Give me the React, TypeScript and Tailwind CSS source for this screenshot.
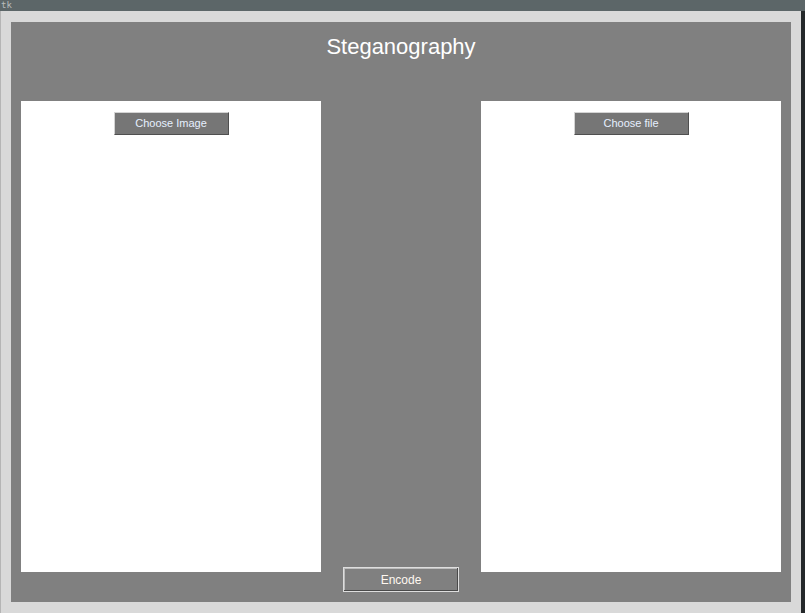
import React from 'react';

const TkButton: React.FC<{ label: string }> = ({ label }) => (
  <button className="w-[115px] h-[23px] bg-[#767676] border border-t-[#d4d4d4] border-l-[#d4d4d4] border-b-[#4f4f4f] border-r-[#4f4f4f] text-[11px] text-[#e6f0ff] leading-none">
    {label}
  </button>
);

export default function App() {
  return (
    <div
      className="w-[805px] h-[613px] flex flex-col bg-[#24282a]"
      style={{ fontFamily: '"Liberation Sans", Arial, sans-serif' }}
    >
      <div className="h-[11px] bg-[#5c6668] flex items-center pl-[1px]">
        <span className="text-[9px] leading-none text-[#b8bcbd]" style={{ fontFamily: '"DejaVu Sans Mono", monospace' }}>
          tk
        </span>
      </div>
      <div className="flex flex-1">
        <div className="w-[1px] bg-[#b5b5b5]" />
        <div className="w-[800px] bg-[#d9d9d9] pt-[11px] pl-[10px] pr-[10px] pb-[11px]">
          <div className="w-[780px] h-[580px] bg-[#808080] flex flex-col">
            <div className="h-[79px] flex justify-center pt-[13px]">
              <h1 className="text-[22px] leading-[24px] text-white">Steganography</h1>
            </div>
            <div className="h-[491px] flex px-[10px]">
              <div className="w-[300px] h-[471px] bg-white flex justify-center items-start pt-[11px]">
                <TkButton label="Choose Image" />
              </div>
              <div className="w-[160px] flex items-end justify-center">
                <button className="w-[116px] h-[25px] bg-[#808080] border border-[#dedede] shadow-[inset_-1px_-1px_0_#4a4a4a,inset_1px_1px_0_#bdbdbd] text-[12px] text-[#fff8f0] leading-none">
                  Encode
                </button>
              </div>
              <div className="w-[300px] h-[471px] bg-white flex justify-center items-start pt-[11px]">
                <TkButton label="Choose file" />
              </div>
            </div>
          </div>
        </div>
        <div className="flex-1 bg-[#24282a]" />
      </div>
    </div>
  );
}
